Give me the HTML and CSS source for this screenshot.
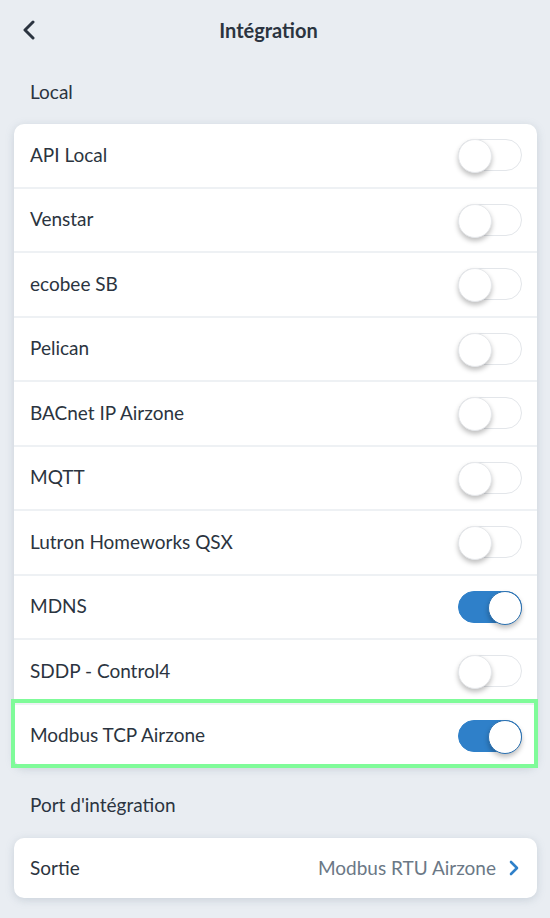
FILE: index.html
```html
<!DOCTYPE html>
<html lang="fr">
<head>
<meta charset="utf-8">
<link rel="stylesheet" href="styles.css">
</head>
<body>
<div class="screen">
  <header class="topbar">
    <button class="back" aria-label="Retour">
      <svg width="14" height="20" viewBox="0 0 14 20"><path d="M11 2 L3 10 L11 18" fill="none" stroke="#2b3440" stroke-width="3" stroke-linecap="round" stroke-linejoin="round"/></svg>
    </button>
    <h1 class="title">Intégration</h1>
  </header>

  <h2 class="section">Local</h2>
  <div class="card">
    <div class="row"><span class="label">API Local</span><span class="toggle"></span></div>
    <div class="row"><span class="label">Venstar</span><span class="toggle"></span></div>
    <div class="row"><span class="label">ecobee SB</span><span class="toggle"></span></div>
    <div class="row"><span class="label">Pelican</span><span class="toggle"></span></div>
    <div class="row"><span class="label">BACnet IP Airzone</span><span class="toggle"></span></div>
    <div class="row"><span class="label">MQTT</span><span class="toggle"></span></div>
    <div class="row"><span class="label">Lutron Homeworks QSX</span><span class="toggle"></span></div>
    <div class="row"><span class="label">MDNS</span><span class="toggle on"></span></div>
    <div class="row"><span class="label">SDDP - Control4</span><span class="toggle"></span></div>
    <div class="row highlight"><span class="label">Modbus TCP Airzone</span><span class="toggle on"></span></div>
  </div>

  <h2 class="section section2">Port d'intégration</h2>
  <div class="card card2">
    <div class="row link"><span class="label">Sortie</span><span class="value">Modbus RTU Airzone</span>
      <svg class="chev" width="12" height="18" viewBox="0 0 12 18"><path d="M3 3 L9 9 L3 15" fill="none" stroke="#2f80c9" stroke-width="2.6" stroke-linecap="round" stroke-linejoin="round"/></svg>
    </div>
  </div>
</div>
</body>
</html>
```

FILE: styles.css
```css
* { box-sizing: border-box; }
html, body { margin: 0; padding: 0; }
body {
  background: #e9edf2;
  font-family: "Lato", "Open Sans", sans-serif;
  color: #2b3440;
  width: 550px;
  height: 918px;
  overflow: hidden;
}
.screen { padding: 0 13px 0 14px; }
.topbar {
  height: 60px;
  display: flex;
  align-items: center;
  position: relative;
}
.back {
  background: none;
  border: 0;
  padding: 0;
  margin-left: 8px;
  width: 14px;
  height: 20px;
  display: flex;
}
.title {
  position: absolute;
  left: 0;
  right: 14px;
  text-align: center;
  margin: 0;
  font-size: 20px;
  font-weight: 700;
  color: #2b3440;
}
.section {
  margin: 0;
  padding: 20px 0 0 16px;
  height: 64px;
  font-size: 19px;
  font-weight: 400;
  color: #2b3440;
}
.section2 { padding-top: 26px; height: 71px; }
.card {
  background: #fff;
  border-radius: 10px;
  box-shadow: 0 2px 8px rgba(120, 135, 155, 0.28);
}
.row {
  height: 64.5px;
  display: flex;
  align-items: center;
  padding: 0 15px 2px 16px;
  border-top: 2px solid #eef1f4;
  font-size: 19px;
}
.row:first-child { border-top: 0; height: 62.5px; }
.label { flex: 1; }
.toggle {
  width: 64px;
  height: 32px;
  border-radius: 16px;
  border: 1px solid #e3e6ea;
  background: #fff;
  position: relative;
  margin-top: 2px;
}
.toggle::after {
  content: "";
  position: absolute;
  top: -1px;
  left: -1px;
  width: 32px;
  height: 32px;
  border-radius: 50%;
  background: #fff;
  border: 1px solid #e6e8eb;
  box-shadow: 0 3px 5px rgba(0, 0, 0, 0.25);
}
.toggle.on {
  background: #2f80c9;
  border-color: #2f80c9;
}
.toggle.on::after {
  left: auto;
  right: -1px;
  border-color: #2a70b0;
}
.highlight { position: relative; }
.highlight::before {
  content: "";
  position: absolute;
  left: -3px;
  right: -1px;
  top: -6px;
  bottom: -1px;
  border: 4px solid #7ffb99;
  pointer-events: none;
}
.card2 .row { height: 60px; }
.value { color: #6b7886; margin-right: 12px; }
.chev { margin-right: 2px; margin-top: 2px; }
```
